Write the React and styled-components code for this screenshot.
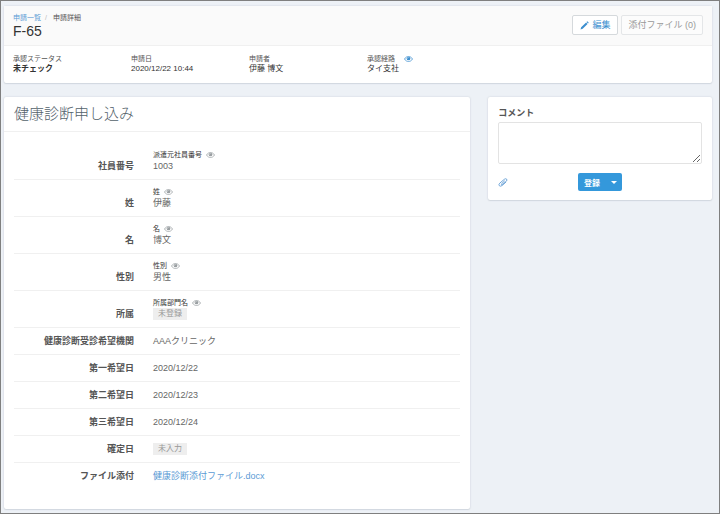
import styled, { createGlobalStyle } from "styled-components";
import { useState } from "react";

const resumo = [
    { titulo: "承認ステータス", valor: "未チェック", negrito: true },
    { titulo: "申請日", valor: "2020/12/22 10:44" },
    { titulo: "申請者", valor: "伊藤 博文" },
    { titulo: "承認経路", valor: "タイ支社", olho: true },
];

const campos = [
    { nome: "社員番号", origem: "派遣元社員番号", valor: "1003" },
    { nome: "姓", origem: "姓", valor: "伊藤" },
    { nome: "名", origem: "名", valor: "博文" },
    { nome: "性別", origem: "性別", valor: "男性" },
    { nome: "所属", origem: "所属部門名", vazio: "未登録" },
    { nome: "健康診断受診希望機関", valor: "AAAクリニック" },
    { nome: "第一希望日", valor: "2020/12/22" },
    { nome: "第二希望日", valor: "2020/12/23" },
    { nome: "第三希望日", valor: "2020/12/24" },
    { nome: "確定日", vazio: "未入力" },
    { nome: "ファイル添付", arquivo: "健康診断添付ファイル.docx" },
];

function Olho({ cor }) {
    return (
        <IconeOlho viewBox="0 0 18 12" $cor={cor} aria-hidden="true">
            <path d="M1 6C3 2.500 6 1 9 1s6 1.500 8 5c-2 3.500-5 5-8 5S3 9.500 1 6Z" fill="none" stroke="currentColor" strokeWidth="1.500" />
            <circle cx="9" cy="5" r="3.700" fill="currentColor" />
            <path d="M7 5a2 2 0 0 1 2-2" fill="none" stroke="#fff" strokeWidth="1" />
        </IconeOlho>
    )
}

function Lapis() {
    return (
        <IconeLapis viewBox="0 0 18 18" aria-hidden="true">
            <path d="M1 17l1.300-4.400L12.200 2.900l2.900 2.900L5.400 15.700ZM13.100 2l.9-.9q.8-.6 1.500.1l1.300 1.300q.7.700.1 1.500l-.9.900Z" fill="currentColor" />
        </IconeLapis>
    )
}

function Clipe() {
    return (
        <IconeClipe viewBox="0 0 20 18" aria-hidden="true">
            <path d="M13 6l-5.500 5q-1.300 1.500-.4 2.300.9.700 2.300-.5l7.200-6.300q2.300-2.500.6-4.300-1.900-1.700-4.500.4L3.500 10.300q-2.800 3-.8 5.200 2.300 2 5.300-.4l7.500-6.600" fill="none" stroke="currentColor" strokeWidth="2" strokeLinecap="round" />
        </IconeClipe>
    )
}

export default function App() {
    const [comentario, setComentario] = useState("");

    return (
        <Pagina>
            <Global />
            <Cartao as="header">
                <Topo>
                    <div>
                        <Trilha aria-label="breadcrumb">
                            <a href="#lista">申請一覧</a>
                            <Barra>/</Barra>
                            <span>申請詳細</span>
                        </Trilha>
                        <Codigo>F-65</Codigo>
                    </div>
                    <Acoes>
                        <Botao type="button" $destaque><Lapis />編集</Botao>
                        <Botao type="button">添付ファイル (0)</Botao>
                    </Acoes>
                </Topo>
                <Resumo>
                    {resumo.map((r) => (
                        <ItemResumo key={r.titulo}>
                            <dt>{r.titulo}{r.olho && <Olho cor="#3d8fcf" />}</dt>
                            <ValorResumo $negrito={r.negrito}>{r.valor}</ValorResumo>
                        </ItemResumo>
                    ))}
                </Resumo>
            </Cartao>
            <Colunas>
                <Cartao as="main">
                    <Titulo>健康診断申し込み</Titulo>
                    <Lista>
                        {campos.map((c) => (
                            <Linha key={c.nome}>
                                <Nome>{c.nome}</Nome>
                                <Valor>
                                    {c.origem && <Origem>{c.origem}<Olho cor="#9a9fa2" /></Origem>}
                                    {c.valor}
                                    {c.vazio && <Vazio>{c.vazio}</Vazio>}
                                    {c.arquivo && <a href="#arquivo">{c.arquivo}</a>}
                                </Valor>
                            </Linha>
                        ))}
                    </Lista>
                </Cartao>
                <Comentario onSubmit={(e) => e.preventDefault()}>
                    <Rotulo htmlFor="comentario">コメント</Rotulo>
                    <Texto id="comentario" value={comentario} onChange={(e) => setComentario(e.target.value)} />
                    <Rodape>
                        <Anexo type="button" aria-label="ファイルを添付"><Clipe /></Anexo>
                        <Grupo>
                            <Registrar type="submit">登録</Registrar>
                            <Abrir type="button" aria-label="メニュー"><Seta /></Abrir>
                        </Grupo>
                    </Rodape>
                </Comentario>
            </Colunas>
        </Pagina>
    )
}

const Global = createGlobalStyle`
    * {
        box-sizing: border-box;
    }
    body {
        margin: 0;
        background: #edf1f6;
    }
    body, button, textarea {
        font-family: 'Liberation Sans', 'Noto Sans CJK JP', sans-serif;
    }
    a {
        color: #5b9bd5;
        text-decoration: none;
    }
    dl, dd {
        margin: 0;
    }
`
const Pagina = styled.div`
    min-height: 100vh;
    border: 1px solid #7f7f7f;
    padding: 5px 7px 3px 3px;
    display: flex;
    flex-direction: column;
    gap: 14px;
    color: #555;
`
const Cartao = styled.section`
    background: #fff;
    border-radius: 2px;
    box-shadow: 0 0 2px rgba(60, 75, 95, 0.2), 0 1px 1px rgba(60, 75, 95, 0.1);
`
const Topo = styled.div`
    display: flex;
    justify-content: space-between;
    align-items: flex-start;
    padding: 7px 9px 6px;
    background: #fafafa;
    border-bottom: 1px solid #f0f0f0;
`
const Trilha = styled.nav`
    display: flex;
    font-size: 7px;
    line-height: 10px;
`
const Barra = styled.span`
    padding: 0 6px 0 4px;
    color: #bbb;
`
const Codigo = styled.h1`
    margin: 0;
    font-size: 14px;
    font-weight: 400;
    line-height: 16px;
    color: #333;
`
const Acoes = styled.div`
    display: flex;
    gap: 3px;
    padding-top: 2px;
`
const Botao = styled.button`
    display: flex;
    align-items: center;
    gap: 3px;
    height: 20px;
    padding: 0 ${(p) => (p.$destaque ? 7 : 6)}px;
    border: 1px solid ${(p) => (p.$destaque ? "#d5d9dc" : "#e4e6e8")};
    border-radius: 2px;
    background: ${(p) => (p.$destaque ? "#fff" : "#fcfcfc")};
    color: ${(p) => (p.$destaque ? "#3d8fcf" : "#999")};
    font-size: 9px;
    line-height: 12px;
`
const Resumo = styled.dl`
    display: grid;
    grid-template-columns: repeat(6, 1fr);
    padding: 8px 0 9px;
`
const ItemResumo = styled.div`
    padding-left: 9px;
    font-size: 7px;
    line-height: 10px;

    dt {
        display: flex;
        align-items: center;
        gap: 9px;
    }
`
const ValorResumo = styled.dd`
    font-size: 8px;
    font-weight: ${(p) => (p.$negrito ? 700 : 400)};
    color: #333;
`
const Colunas = styled.div`
    display: grid;
    grid-template-columns: 25fr 12fr;
    align-items: start;
    gap: 18px;
`
const Titulo = styled.h2`
    margin: 0;
    padding: 0 10px;
    border-bottom: 1px solid #f0f0f0;
    font-size: 15px;
    font-weight: 300;
    line-height: 34px;
    color: #53626b;
`
const Lista = styled.dl`
    padding: 11px 10px 20px;
`
const Linha = styled.div`
    display: grid;
    grid-template-columns: 120px 1fr;
    column-gap: 19px;
    align-items: end;
    padding: 7px 0;
    border-bottom: 1px solid #f0f0f0;
    font-size: 9px;
    line-height: 12px;

    &:last-child {
        border-bottom: none;
    }
`
const Nome = styled.dt`
    text-align: right;
    font-weight: 700;
`
const Valor = styled.dd`
    color: #666;
`
const Origem = styled.div`
    display: flex;
    align-items: center;
    gap: 4px;
    font-size: 7px;
    line-height: 10px;
    color: #333;
`
const Vazio = styled.span`
    display: block;
    width: fit-content;
    padding: 0 5px;
    background: #eee;
    font-size: 8px;
    color: #999;
`
const Comentario = styled.form`
    display: flex;
    flex-direction: column;
    padding: 10px 10px 9px;
    background: #fff;
    border-radius: 2px;
    box-shadow: 0 0 2px rgba(60, 75, 95, 0.2), 0 1px 1px rgba(60, 75, 95, 0.1);
`
const Rotulo = styled.label`
    margin-bottom: 3px;
    font-size: 9px;
    font-weight: 700;
    line-height: 12px;
`
const Texto = styled.textarea`
    width: 100%;
    height: 42px;
    border: 1px solid #e3e3e3;
    border-radius: 2px;
    padding: 4px;
    font-size: 9px;
    resize: vertical;
`
const Rodape = styled.div`
    display: grid;
    grid-template-columns: 1fr auto 1fr;
    align-items: center;
    margin-top: 9px;
`
const Anexo = styled.button`
    display: flex;
    justify-self: start;
    padding: 0;
    border: none;
    background: none;
    color: #6fa5d8;
`
const Grupo = styled.div`
    display: flex;
    height: 18px;
    border-radius: 2px;
    background: #3498db;
    overflow: hidden;
`
const Registrar = styled.button`
    padding: 0 6px;
    border: none;
    background: none;
    color: #fff;
    font-size: 8px;
    font-weight: 700;
`
const Abrir = styled.button`
    display: flex;
    align-items: center;
    justify-content: center;
    width: 16px;
    padding: 0;
    border: none;
    background: none;
`
const Seta = styled.span`
    border: 3px solid transparent;
    border-top-color: #fff;
    border-bottom: none;
`
const IconeOlho = styled.svg`
    width: 9px;
    height: 6px;
    color: ${(p) => p.$cor};
`
const IconeLapis = styled.svg`
    width: 9px;
    height: 9px;
`
const IconeClipe = styled.svg`
    width: 10px;
    height: 9px;
`
